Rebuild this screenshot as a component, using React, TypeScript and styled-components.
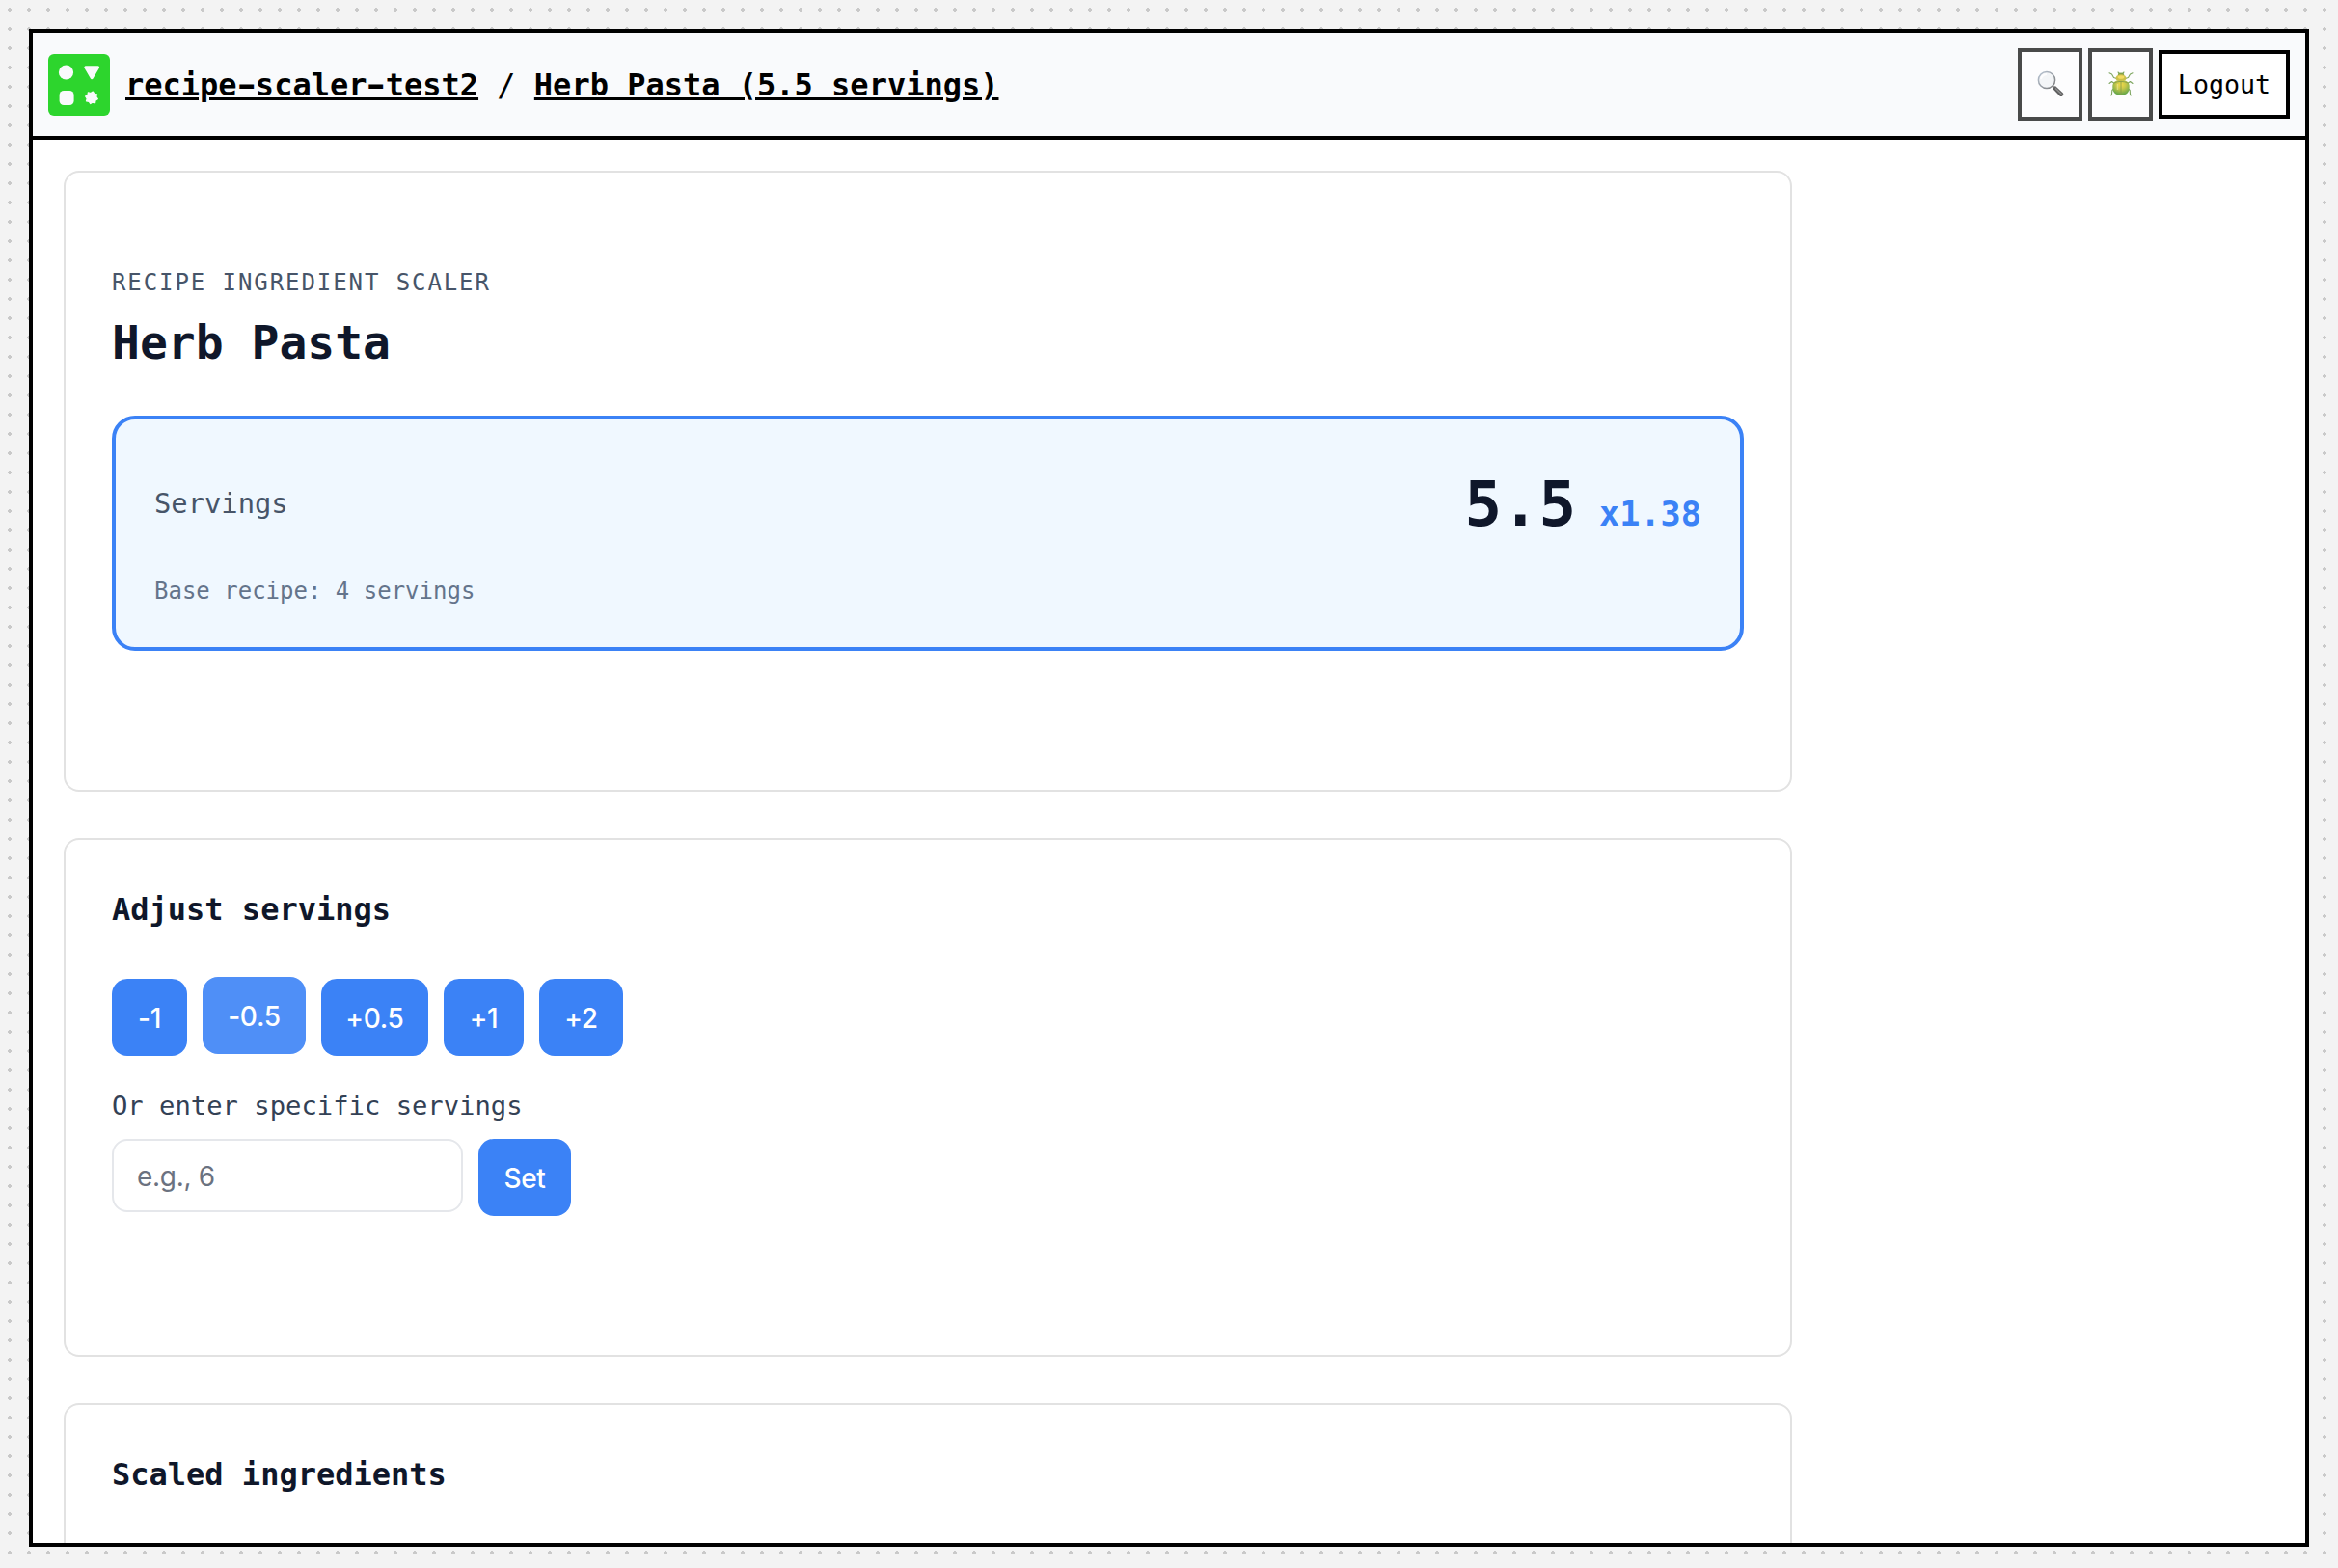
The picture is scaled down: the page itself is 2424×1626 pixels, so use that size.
import React from "react";
import styled, { createGlobalStyle } from "styled-components";

const MONO = '"DejaVu Sans Mono", monospace';
const SANS = 'Inter, sans-serif';

const GlobalStyle = createGlobalStyle`
  * { box-sizing: border-box; }
  body {
    margin: 0;
    background-color: #f3f3f3;
    background-image: radial-gradient(circle, #c9c9c9 2px, transparent 2px);
    background-size: 20px 20px;
  }
`;

const Page = styled.div`
  height: 1626px;
  padding: 30px 30px 22px;
  font-family: ${MONO};
  color: #000;
`;

const Frame = styled.div`
  height: 1574px;
  display: flex;
  flex-direction: column;
  border: 4px solid #000;
  background: #fff;
  overflow: hidden;
`;

const Header = styled.header`
  flex: none;
  height: 111px;
  display: flex;
  align-items: center;
  justify-content: space-between;
  padding: 0 16px;
  border-bottom: 4px solid #000;
  background: #f9fafc;
`;

const Brand = styled.div`
  display: flex;
  align-items: center;
  gap: 16px;
`;

const Logo = styled.svg`
  display: block;
  width: 64px;
  height: 64px;
`;

const Crumbs = styled.nav`
  font-size: 32px;
  line-height: 38px;
  white-space: pre;
`;

const CrumbLink = styled.a`
  font-weight: 700;
  color: #000;
  text-decoration: underline;
  text-decoration-thickness: 3px;
`;

const WideHyphen = styled.span`
  display: inline-block;
  text-decoration: underline;
  text-decoration-thickness: 3px;
  transform: scaleX(1.5);
`;

const Actions = styled.div`
  display: flex;
  align-items: center;
  gap: 6px;
`;

const LogoutButton = styled.button`
  width: 136px;
  height: 71px;
  padding: 0;
  border: 4px solid #000;
  background: #fff;
  color: #000;
  font: 400 26.67px/32px ${MONO};
`;

const IconButton = styled.button`
  width: 67px;
  height: 75px;
  padding: 0 0 2px;
  display: flex;
  align-items: center;
  justify-content: center;
  border: 4px solid #000;
  background: #fff;
  opacity: 0.7;
`;

const Emoji = styled.svg`
  display: block;
  width: 28px;
  height: 28px;
`;

const Content = styled.main`
  display: flex;
  flex-direction: column;
  gap: 48px;
  padding: 32px;
`;

const Card = styled.section<{ $height: number; $top?: number }>`
  flex: none;
  width: 1792px;
  height: ${(p) => p.$height}px;
  padding: ${(p) => p.$top ?? 48}px 48px 48px;
  border: 2px solid #e2e2e2;
  border-radius: 16px;
  background: #fff;
`;

const Kicker = styled.p`
  margin: 0;
  font-size: 24px;
  line-height: 32px;
  letter-spacing: 0.08em;
  text-transform: uppercase;
  color: #475569;
`;

const Title = styled.h1`
  margin: 14px 0 44px;
  font-size: 48px;
  line-height: 64px;
  font-weight: 700;
  color: #0f172a;
`;

const Summary = styled.div`
  height: 244px;
  padding: 50px 40px 0;
  border: 4px solid #3b82f6;
  border-radius: 24px;
  background: #f0f8ff;
`;

const SummaryRow = styled.div`
  display: flex;
  align-items: center;
  justify-content: space-between;
  height: 76px;
`;

const Label = styled.span`
  padding-bottom: 2px;
  font-size: 28.8px;
  line-height: 36px;
  color: #475569;
`;

const Amount = styled.div`
  display: flex;
  align-items: baseline;
  gap: 24px;
  font-size: 64px;
  line-height: 76px;
  font-weight: 700;
  color: #0f172a;
`;

const Factor = styled.span`
  font-size: 35.2px;
  line-height: 40px;
  color: #3b82f6;
`;

const BaseNote = styled.p`
  margin: 36px 0 0;
  font-size: 24px;
  line-height: 32px;
  color: #64748b;
`;

const SectionTitle = styled.h2`
  margin: 0;
  font-size: 32px;
  line-height: 48px;
  font-weight: 700;
  color: #0f172a;
`;

const Steps = styled.div`
  display: flex;
  gap: 16px;
  margin-top: 48px;
`;

const BlueButton = styled.button<{ $width: number; $hover?: boolean }>`
  width: ${(p) => p.$width}px;
  height: 80px;
  padding: 2px 0 0;
  border: 0;
  border-radius: 16px;
  background: ${(p) => (p.$hover ? "#4f8ff7" : "#3b82f6")};
  color: #fff;
  font: 500 28px/34px ${SANS};
  letter-spacing: -0.3px;
  transform: ${(p) => (p.$hover ? "translateY(-2px)" : "none")};
`;

const FieldLabel = styled.label`
  display: block;
  margin: 34px 0 17px;
  font-size: 27.2px;
  line-height: 35px;
  color: #334155;
`;

const FieldRow = styled.div`
  display: flex;
  align-items: flex-start;
  gap: 16px;
`;

const Input = styled.input`
  width: 364px;
  height: 76px;
  padding: 1px 24px 0;
  border: 2px solid #e5e7eb;
  border-radius: 16px;
  background: #fff;
  font: 400 28px/34px ${SANS};
  letter-spacing: -0.3px;
  &::placeholder {
    color: #6b7280;
    opacity: 1;
  }
`;

const STEPS = [
  { label: "-1", width: 78 },
  { label: "-0.5", width: 107, hover: true },
  { label: "+0.5", width: 111 },
  { label: "+1", width: 83 },
  { label: "+2", width: 87 },
];

const LogoMark = () => (
  <Logo viewBox="0 0 64 64">
    <rect width="64" height="64" rx="6" fill="#2dd52d" />
    <g fill="#f9fafc" stroke="#f9fafc" strokeLinejoin="round">
      <circle cx="18.5" cy="19" r="7.6" stroke="none" />
      <path d="M38.8 13.7H51.6L45.2 24.8Z" strokeWidth="3" />
      <rect x="11.6" y="38" width="15" height="15" rx="4.5" stroke="none" />
      <path
        d="M45 39 46.9 41 49.6 40.8 49.4 43.4 51.4 45.3 49.4 47.2 49.6 49.9 46.9 49.7 45 51.6 43.1 49.7 40.4 49.9 40.6 47.2 38.6 45.3 40.6 43.4 40.4 40.8 43.1 41Z"
        strokeWidth="1.4"
        transform="rotate(12 45 45.3)"
      />
    </g>
  </Logo>
);

const Magnifier = () => (
  <Emoji viewBox="0 0 28 28">
    <defs>
      <linearGradient id="rim" x1="0" y1="0" x2="1" y2="1">
        <stop offset="0" stopColor="#9fb0c4" />
        <stop offset="1" stopColor="#444" />
      </linearGradient>
      <linearGradient id="grip" x1="1" y1="0" x2="0" y2="1">
        <stop offset="0" stopColor="#555" />
        <stop offset="0.4" stopColor="#2c2c2c" />
        <stop offset="1" stopColor="#000" />
      </linearGradient>
    </defs>
    <path d="M15.8 15.8 18.5 18.5" stroke="#666" strokeWidth="2" />
    <path d="M16 18.8 18.9 15.900 27 23.400Q28 24.800 26.600 26.200 25.200 27.700 23.700 26.700Z" fill="url(#grip)" />
    <path d="M19 18.500 25.500 24.800" stroke="#888" strokeWidth="1" />
    <circle cx="10" cy="10" r="8.6" fill="#f1f3f5" stroke="url(#rim)" strokeWidth="1.5" />
    <path d="M4 9Q5 4.5 10 4" stroke="#fff" strokeWidth="2" fill="none" />
  </Emoji>
);

const Beetle = () => (
  <Emoji viewBox="0 0 28 28">
    <defs>
      <radialGradient id="shell" cx="0.5" cy="0.28" r="0.7">
        <stop offset="0" stopColor="#f2cf00" />
        <stop offset="0.4" stopColor="#b5b400" />
        <stop offset="1" stopColor="#1f8000" />
      </radialGradient>
    </defs>
    <g fill="none" stroke="#4c8420" strokeWidth="1.1" strokeLinecap="round" strokeLinejoin="round">
      <path d="M9.500 8.500 6.500 7.500 4.500 4 2 2.800" />
      <path d="M18.500 8.500 21.500 7.500 23.500 4 26 2.800" />
      <path d="M6.500 13 4.500 11.500 2 13.500" />
      <path d="M21.500 13 23.500 11.500 26 13.500" />
      <path d="M6.500 19 4.800 20.500 4.500 24.500 3.800 26" />
      <path d="M21.500 19 23.200 20.500 23.500 24.500 24.200 26" />
      <path d="M12.500 3.500 11 2" />
      <path d="M15.500 3.500 17 2" />
    </g>
    <ellipse cx="14" cy="5" rx="3.2" ry="2.400" fill="#4b7a00" />
    <ellipse cx="14" cy="8" rx="5.5" ry="3.7" fill="#b8a800" />
    <ellipse cx="14" cy="7" rx="3.4" ry="1.8" fill="#f0cf20" />
    <path d="M14 10.500Q21 9.500 22.600 15 23.800 25.600 14 25.800 4.200 25.600 5.400 15 7 9.500 14 10.500Z" fill="url(#shell)" />
    <path d="M6.300 13.200Q14 9.500 21.700 13.200M14 11V25.500" stroke="#577700" strokeWidth="0.9" fill="none" />
    <path d="M10.500 14V20" stroke="#eee46a" strokeWidth="1.5" opacity="0.6" />
  </Emoji>
);

export default function App() {
  return (
    <>
      <GlobalStyle />
      <Page>
        <Frame>
          <Header>
            <Brand>
              <LogoMark />
              <Crumbs>
                <CrumbLink>
                  recipe<WideHyphen>-</WideHyphen>scaler<WideHyphen>-</WideHyphen>test2
                </CrumbLink>
                {" / "}
                <CrumbLink>Herb Pasta (5.5 servings)</CrumbLink>
              </Crumbs>
            </Brand>
            <Actions>
              <IconButton aria-label="Search">
                <Magnifier />
              </IconButton>
              <IconButton aria-label="Debug">
                <Beetle />
              </IconButton>
              <LogoutButton>Logout</LogoutButton>
            </Actions>
          </Header>
          <Content>
            <Card $height={644} $top={98}>
              <Kicker>Recipe Ingredient Scaler</Kicker>
              <Title>Herb Pasta</Title>
              <Summary>
                <SummaryRow>
                  <Label>Servings</Label>
                  <Amount>
                    <span>5.5</span>
                    <Factor>x1.38</Factor>
                  </Amount>
                </SummaryRow>
                <BaseNote>Base recipe: 4 servings</BaseNote>
              </Summary>
            </Card>
            <Card $height={538}>
              <SectionTitle>Adjust servings</SectionTitle>
              <Steps>
                {STEPS.map((s) => (
                  <BlueButton key={s.label} $width={s.width} $hover={s.hover}>
                    {s.label}
                  </BlueButton>
                ))}
              </Steps>
              <FieldLabel htmlFor="servings">Or enter specific servings</FieldLabel>
              <FieldRow>
                <Input id="servings" placeholder="e.g., 6" />
                <BlueButton $width={96}>Set</BlueButton>
              </FieldRow>
            </Card>
            <Card $height={538}>
              <SectionTitle>Scaled ingredients</SectionTitle>
            </Card>
          </Content>
        </Frame>
      </Page>
    </>
  );
}
